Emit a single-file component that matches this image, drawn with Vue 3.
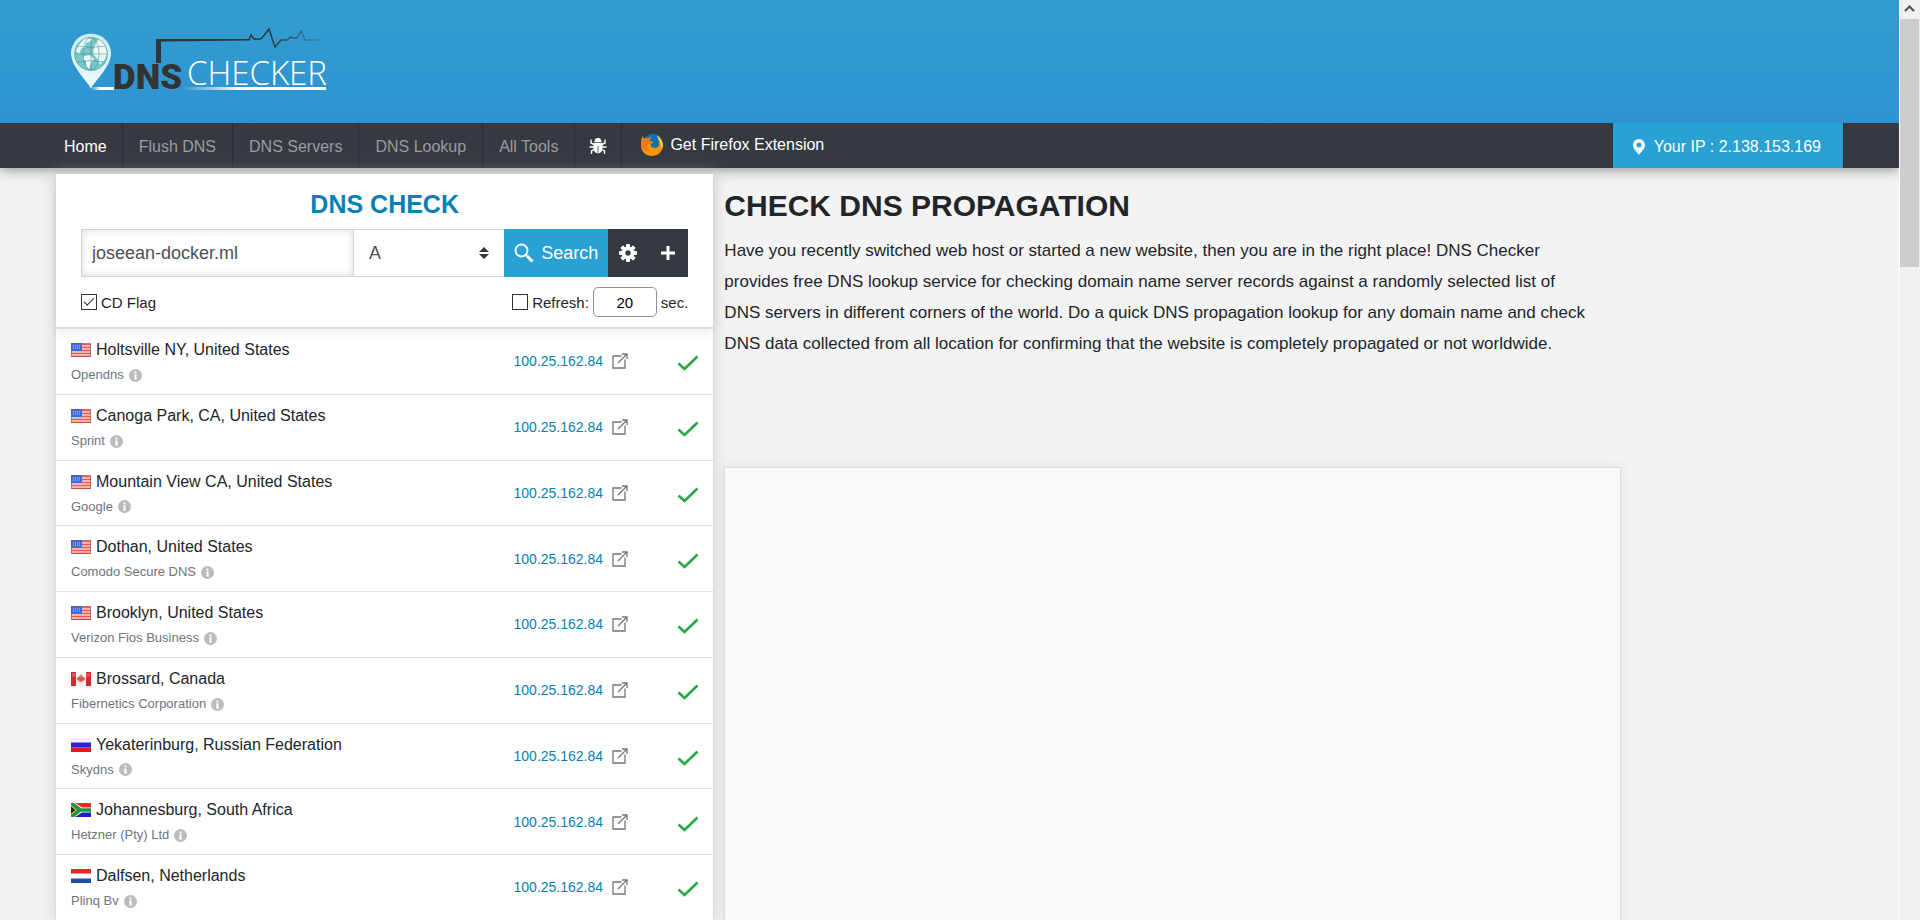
<script setup>
import { ref } from 'vue'

const links = ['Home', 'Flush DNS', 'DNS Servers', 'DNS Lookup', 'All Tools']
const domain = ref('joseean-docker.ml')
const recordType = ref('A')
const recordTypes = ['A', 'AAAA', 'CNAME', 'MX', 'NS', 'PTR', 'SOA', 'SRV', 'TXT', 'CAA']
const cdFlag = ref(true)
const refresh = ref(false)
const seconds = ref('20')

const servers = [
  { flag: 'us', place: 'Holtsville NY, United States', provider: 'Opendns' },
  { flag: 'us', place: 'Canoga Park, CA, United States', provider: 'Sprint' },
  { flag: 'us', place: 'Mountain View CA, United States', provider: 'Google' },
  { flag: 'us', place: 'Dothan, United States', provider: 'Comodo Secure DNS' },
  { flag: 'us', place: 'Brooklyn, United States', provider: 'Verizon Fios Business' },
  { flag: 'ca', place: 'Brossard, Canada', provider: 'Fibernetics Corporation' },
  { flag: 'ru', place: 'Yekaterinburg, Russian Federation', provider: 'Skydns' },
  { flag: 'za', place: 'Johannesburg, South Africa', provider: 'Hetzner (Pty) Ltd' },
  { flag: 'nl', place: 'Dalfsen, Netherlands', provider: 'Plinq Bv' },
]
const result = '100.25.162.84'
</script>

<template>
  <div class="window">
    <div class="page">
      <header class="banner">
        <a href="#" class="logo" aria-label="DNS Checker">
          <svg width="260" height="66" viewBox="0 0 260 66">
            <defs>
              <linearGradient id="tail" x1="0" x2="1"><stop offset="0" stop-color="#fff" stop-opacity="0" /><stop offset=".4" stop-color="#fff" /><stop offset="1" stop-color="#fff" /></linearGradient>
              <linearGradient id="pulse" gradientUnits="userSpaceOnUse" x1="200" y1="0" x2="254" y2="0"><stop offset="0" stop-color="#333" /><stop offset="1" stop-color="#333" stop-opacity=".1" /></linearGradient>
              <linearGradient id="pin" x1="0" y1="0" x2="0" y2="1"><stop offset="0" stop-color="#c9ebf3" /><stop offset="1" stop-color="#effafd" /></linearGradient>
            </defs>
            <path d="M21 58.500C17 51 1 36 1 23.500a20 20 0 0 1 40 0C41 36 25 51 21 58.500z" fill="url(#pin)" />
            <circle cx="21" cy="24" r="16.500" fill="#7cc7c6" />
            <g fill="#eefaf8">
              <path d="M8 16l6-7 8-2-1 4-5 2-1 4-4 2-2 5-3-3zM14 26l6-1 4 4-3 4-2 6-3-3v-5l-3-2zM26 13l3-4 6 6 2 9-3 7-4 3-3-6-4-4 1-6z" />
            </g>
            <g fill="none" stroke="#2f8f98" stroke-width=".8" opacity=".65">
              <circle cx="21" cy="24" r="16.500" />
              <ellipse cx="21" cy="24" rx="8" ry="16.500" />
              <path d="M21 7.500v33M5 24h32M7 16q14 3 28 0M7 32q14-3 28 0" />
            </g>
            <path d="M21 57h23v3H21z" fill="url(#tail)" />
            <path d="M112 57h144v3H112z" fill="url(#tail)" />
            <path d="M179 10l2-5 3 4h7l8-10 6 18 6-7h6l4-3 2 1h4l4-7 4 9h18" fill="none" stroke="url(#pulse)" stroke-width="1.500" />
            <path d="M86 9h94v1.500l-89 1V33h-5z" fill="#333" />
            <text x="43" y="59" class="logo-dns">DNS</text>
            <text x="117" y="55" class="logo-checker">CHECKER</text>
          </svg>
        </a>
      </header>

      <nav class="nav">
        <div class="nav-inner">
          <a v-for="(link, i) in links" :key="link" href="#" class="nav-link" :class="{ active: i === 0 }">{{ link }}</a>
          <a href="#" class="nav-link bug" aria-label="Report a bug">
            <svg width="18" height="18" viewBox="0 0 18 18" fill="none" stroke="#fff" stroke-width="1.400">
              <path d="M5.500 5a3.500 4 0 0 1 7 0z" fill="#fff" stroke="none" />
              <path d="M4.500 5.800h9v5.500c0 3-2 5.200-4.500 5.200s-4.500-2.200-4.500-5.200z" fill="#fff" stroke="none" />
              <path d="M5 7.500L2 6V2.500M13 7.500L16 6V2.500M5 10H.5M13 10h4.500M5 12.500L2.500 14v3M13 12.500l2.500 1.500v3" />
              <path d="M9 9v7.500" stroke="#353940" stroke-width=".8" />
            </svg>
          </a>
          <a href="#" class="firefox">
            <svg width="24" height="24" viewBox="0 0 24 24">
              <circle cx="13" cy="10.500" r="9.800" fill="#0b72b5" />
              <path d="M17 2.500c3 2 6 5.500 6 10.500a11 11 0 0 1-11 10C5.500 23 1 18.500 1 12 1 8 1.500 5 3 3c0 1 .3 2 1 2.500 1.500-.5 3-.4 4 .2L11 4c-.3 1.500-1 2.500-2 3l1 1.500 3 .3c0 1.200-1.500 1.500-2.500 2.300.5 3 2 3.900 4.500 3.900 3 0 4-2 4-4 0-3-1-5.500-2-8.500z" fill="#ff9500" />
              <path d="M17 2.500c3 2 6 5.500 6 10.500l-1 3c-1-3-1-7-3-9.500-.5-1.500-1.500-3-2-4z" fill="#ffdc3e" />
              <path d="M3 3c0 1 .3 2 1 2.500 1.500-.5 3-.4 4 .2L11 4c-.3 1.500-1 2.500-2 3l1 1.500 3 .3c0 1.200-1.500 1.500-2.500 2.300L8 11l-1 3c1 3 3 4 5 4-4 1-9 0-11-6C1 8 1.500 5 3 3z" fill="#ef7a1a" />
            </svg>
            <span>Get Firefox Extension</span>
          </a>
          <a href="#" class="ip">
            <svg width="12" height="16" viewBox="0 0 12 16"><path fill="#fff" fill-rule="evenodd" d="M6 0a6 6 0 0 0-6 6c0 3.500 3 6 6 10 3-4 6-6.500 6-10a6 6 0 0 0-6-6zm0 3.500a2.500 2.500 0 1 1 0 5 2.500 2.500 0 0 1 0-5z" /></svg>
            <span>Your IP : 2.138.153.169</span>
          </a>
        </div>
      </nav>

      <main class="content">
        <section class="card">
          <form class="check" @submit.prevent>
            <h2>DNS CHECK</h2>
            <div class="search">
              <input v-model="domain" class="domain" type="text" aria-label="Domain name" />
              <div class="type">
                <select v-model="recordType" aria-label="Record type">
                  <option v-for="t in recordTypes" :key="t">{{ t }}</option>
                </select>
                <svg width="10" height="12" viewBox="0 0 10 12" fill="#343a40"><path d="M5 0l5 5H0zM5 12L0 7h10z" /></svg>
              </div>
              <button class="go" type="submit">
                <svg width="20" height="20" viewBox="0 0 20 20" fill="none" stroke="#fff"><circle cx="7.500" cy="7.500" r="6" stroke-width="1.800" /><path d="M11.500 11.500l1.500 1.500" stroke-width="2" /><path d="M13 13l5.500 5.500" stroke-width="3" /></svg>
                Search
              </button>
              <button class="dark" type="button" aria-label="Settings">
                <svg width="18" height="18" viewBox="0 0 18 18"><g fill="#fff"><rect v-for="a in [0, 45, 90, 135]" :key="a" x="7" y="0" width="4" height="18" rx="1" :transform="`rotate(${a} 9 9)`" /><circle cx="9" cy="9" r="6.500" /></g><circle cx="9" cy="9" r="2.700" fill="#353940" /></svg>
              </button>
              <button class="dark" type="button" aria-label="Add">
                <svg width="16" height="16" viewBox="0 0 16 16"><path d="M8 1v14M1 8h14" stroke="#fff" stroke-width="3" /></svg>
              </button>
            </div>
            <div class="options">
              <label><input v-model="cdFlag" type="checkbox" />CD Flag</label>
              <div class="refresh">
                <label><input v-model="refresh" type="checkbox" />Refresh:</label>
                <input v-model="seconds" class="seconds" type="text" aria-label="Refresh interval in seconds" />
                <span>sec.</span>
              </div>
            </div>
          </form>

          <table class="results">
            <tbody>
              <tr v-for="s in servers" :key="s.place">
                <td class="server">
                  <div class="place">
                    <svg class="flag" width="20" height="14" viewBox="0 0 20 14" aria-hidden="true">
                      <template v-if="s.flag === 'us'">
                        <rect width="20" height="14" fill="#fbd3ce" />
                        <path d="M0 1.500h20M0 4.500h20M0 7.500h20M0 10.500h20M0 13.500h20" stroke="#f4564b" stroke-width="1.500" />
                        <rect width="11" height="8" fill="#3d6be0" />
                        <path d="M2 3h8M2 5h8" stroke="#b5c8f5" stroke-width="1" stroke-dasharray="1 1" />
                        <rect x=".5" y=".5" width="19" height="13" fill="none" stroke="#8d4a44" stroke-opacity=".55" />
                      </template>
                      <template v-else-if="s.flag === 'ca'">
                        <rect width="20" height="14" fill="#f5efed" />
                        <path d="M0 0h5v14H0zM15 0h5v14h-5z" fill="#d8262c" />
                        <path d="M10 2l1.200 2 1-.4-.2 2 2-.6-.5 1.600.8.700-3 2.200-1.300.300V11l0-1.200-1.300-.3-3-2.200.8-.7L6 5l2 .6-.2-2 1 .4z" fill="#e85050" />
                        <path d="M1 1h18v4H1z" fill="#fff" opacity=".2" />
                      </template>
                      <template v-else-if="s.flag === 'ru'">
                        <rect width="20" height="14" fill="#f6eef0" />
                        <path d="M0 4.500h20v5H0z" fill="#2424e6" />
                        <path d="M0 9.500h20V14H0z" fill="#e3141c" />
                      </template>
                      <template v-else-if="s.flag === 'za'">
                        <rect width="20" height="14" fill="#fff" />
                        <path d="M4 0h16v4.500h-9z" fill="#f0261f" />
                        <path d="M4 14h16V9.500h-9z" fill="#1a1fc4" />
                        <path d="M0 0h3l7 5.300h10v3.400H10L3 14H0z" fill="#21944a" />
                        <path d="M0 2l6 5-6 5z" fill="#e3b93a" />
                        <path d="M0 3.500L4.500 7 0 10.500z" fill="#222" />
                      </template>
                      <template v-else>
                        <rect width="20" height="14" fill="#fff" />
                        <path d="M0 0h20v4.500H0z" fill="#e5262b" />
                        <path d="M0 9.500h20V14H0z" fill="#1f4ea3" />
                      </template>
                    </svg>
                    {{ s.place }}
                  </div>
                  <div class="provider">
                    {{ s.provider }}
                    <svg width="13" height="13" viewBox="0 0 13 13"><circle cx="6.500" cy="6.500" r="6.500" fill="#bbb" /><path d="M5.500 2.500h2v2h-2zM5 5.500h2.500v4H8v1H5v-1h.5v-3H5z" fill="#fff" /></svg>
                  </div>
                </td>
                <td class="address">
                  <a href="#">{{ result }}</a>
                  <svg width="16" height="16" viewBox="0 0 16 16" fill="none" stroke="#6c757d" stroke-width="1.300"><path d="M9.500 3H1v12h12V6.500M6 10L15 1M10 1h5v5" /></svg>
                </td>
                <td class="status">
                  <svg width="22" height="16" viewBox="0 0 22 16" role="img" aria-label="Resolved"><path d="M1.500 8.500l6 5.500L20.500 1.500" fill="none" stroke="#28a745" stroke-width="2.600" /></svg>
                </td>
              </tr>
            </tbody>
          </table>
        </section>

        <section class="about">
          <h1>CHECK DNS PROPAGATION</h1>
          <p>Have you recently switched web host or started a new website, then you are in the right place! DNS Checker provides free DNS lookup service for checking domain name server records against a randomly selected list of DNS servers in different corners of the world. Do a quick DNS propagation lookup for any domain name and check DNS data collected from all location for confirming that the website is completely propagated or not worldwide.</p>
          <div class="map"></div>
        </section>
      </main>
    </div>

    <div class="scrollbar" aria-hidden="true">
      <svg width="20" height="19" viewBox="0 0 20 19"><path d="M5 11l4.500-4.500L14 11" fill="none" stroke="#505050" stroke-width="2.200" /></svg>
      <div class="thumb"></div>
    </div>
  </div>
</template>

<style>
body {
  margin: 0;
  background: #f3f3f3;
}
</style>

<style scoped>
* {
  box-sizing: border-box;
}
.window {
  display: flex;
  height: 100vh;
  overflow: hidden;
  font-family: "Liberation Sans", Arial, sans-serif;
  font-size: 16px;
  color: #212529;
}
.page {
  flex: 1;
  min-width: 0;
  display: flex;
  flex-direction: column;
  overflow: hidden;
}
a {
  text-decoration: none;
}
svg {
  flex: none;
}
.banner {
  position: relative;
  z-index: 1;
  flex: none;
  padding: 30px 70px 27px;
  background: linear-gradient(#329dce, #2f93d3);
}
.logo {
  display: block;
  height: 66px;
}
.logo svg {
  display: block;
  overflow: visible;
}
.logo-dns {
  font-family: Roboto, sans-serif;
  font-weight: 900;
  font-size: 35px;
  fill: #333;
}
.logo-checker {
  font-family: "Open Sans", sans-serif;
  font-weight: 300;
  font-size: 33px;
  fill: #fff;
}
.nav {
  flex: none;
  padding: 0 55px;
  background: #353940;
  box-shadow: 0 2px 12px rgba(0, 0, 0, 0.4);
}
.nav-inner {
  display: flex;
  height: 45px;
}
.nav-link {
  display: flex;
  align-items: center;
  padding: 2px 16px 0;
  border-right: 1px solid #2a2c30;
  color: #9a9c9f;
}
.nav-link:first-child {
  padding: 2px 15px 0 9px;
}
.nav-link.bug {
  padding: 0 14px;
}
.nav-link.active {
  color: #fff;
}
.firefox {
  display: flex;
  align-items: center;
  gap: 6px;
  padding: 0 18px 2px;
  color: #fff;
}
.ip {
  display: flex;
  align-items: center;
  gap: 9px;
  margin-left: auto;
  padding: 2px 22px 0 20px;
  border-right: 1px solid #2a2c30;
  background: #2aa1d4;
  color: #fff;
}
.content {
  flex: 1;
  display: grid;
  grid-template-columns: 659fr 896fr 213fr;
  align-items: start;
  gap: 10px;
  padding: 6px 55px 0;
}
.card {
  border: solid #dcdcdc;
  border-width: 0 1px;
  background: #fff;
  box-shadow: 0 0 14px rgba(200, 200, 200, 0.7);
}
.check {
  position: relative;
  padding: 14px 25px 10px;
  border-bottom: 2px solid #dcdcdc;
  box-shadow: 0 2px 12px rgba(0, 0, 0, 0.08);
}
h2 {
  margin: 0 0 9px;
  font-size: 25px;
  line-height: 32px;
  text-align: center;
  color: #0780b5;
}
.search {
  display: flex;
  height: 48px;
}
.domain {
  flex: 252;
  min-width: 0;
  padding: 0 10px;
  border: 1px solid #ced4da;
  background: #fff;
  box-shadow: inset 0 0 8px rgba(0, 0, 0, 0.15);
  font: 18px "Liberation Sans", Arial, sans-serif;
  color: #495057;
}
.type {
  position: relative;
  flex: 151;
  min-width: 0;
}
.type select {
  width: 100%;
  height: 100%;
  padding: 0 15px;
  border: solid #ced4da;
  border-width: 1px 0;
  border-radius: 0;
  background: #fff;
  appearance: none;
  font: 18px "Liberation Sans", Arial, sans-serif;
  color: #495057;
}
.type svg {
  position: absolute;
  top: 18px;
  right: 15px;
  pointer-events: none;
}
button {
  display: flex;
  align-items: center;
  justify-content: center;
  border: 0;
  color: #fff;
  font: 18px "Liberation Sans", Arial, sans-serif;
}
.go {
  width: 104px;
  gap: 7px;
  padding: 0;
  background: #2aa1d4;
}
.dark {
  width: 40px;
  padding: 0;
  background: #353940;
}
.options {
  display: flex;
  align-items: center;
  justify-content: space-between;
  margin-top: 10px;
  font-size: 15px;
}
.options label {
  display: flex;
  align-items: center;
  gap: 4px;
}
.options input[type="checkbox"] {
  appearance: none;
  width: 16px;
  height: 16px;
  margin: 0;
  border: 1px solid #333;
  background: #fff;
}
.options input[type="checkbox"]:checked::before {
  content: "";
  display: block;
  width: 9px;
  height: 4px;
  margin: 3px 0 0 2px;
  border: solid #333;
  border-width: 0 0 1px 1px;
  transform: rotate(-45deg);
}
.refresh {
  display: flex;
  align-items: center;
  gap: 4px;
}
.seconds {
  width: 64px;
  height: 30px;
  padding: 0;
  border: 1px solid #8f8f9d;
  border-radius: 5px;
  background: #fff;
  font: 15px "Liberation Sans", Arial, sans-serif;
  text-align: center;
}
.results,
.results tbody {
  display: block;
}
.results tr {
  display: grid;
  grid-template-columns: minmax(0, 458fr) 160fr 40fr;
  border-bottom: 1px solid #dee2e6;
}
.results td {
  padding: 0;
}
.results .server {
  padding: 9px 0 7px 15px;
}
.place {
  display: flex;
  align-items: center;
  gap: 5px;
  line-height: 24px;
}
.provider {
  display: flex;
  align-items: center;
  gap: 5px;
  margin-top: 2px;
  font-size: 13px;
  line-height: 1.75;
  color: #6c757d;
}
.results .address {
  display: flex;
  align-items: center;
  gap: 9px;
  font-size: 14px;
}
.address a {
  color: #0780b5;
}
.results .status {
  display: flex;
  align-items: center;
  justify-content: flex-end;
  padding: 4px 14px 0 0;
}
h1 {
  margin: 13px 0 10px;
  font-size: 30px;
  line-height: 38px;
}
p {
  margin: 0 28px 108px 0;
  font-size: 17px;
  line-height: 31px;
}
.map {
  height: 600px;
  border: 1px solid #dcdcdc;
  background: #f8f9fb;
  box-shadow: 0 0 10px rgba(0, 0, 0, 0.08);
}
.scrollbar {
  width: 21px;
  border-left: 1px solid #fff;
  background: #f0f0f0;
}
.scrollbar svg {
  display: block;
}
.thumb {
  height: 27%;
  margin-right: 1px;
  background: #cdcdcd;
}
</style>
